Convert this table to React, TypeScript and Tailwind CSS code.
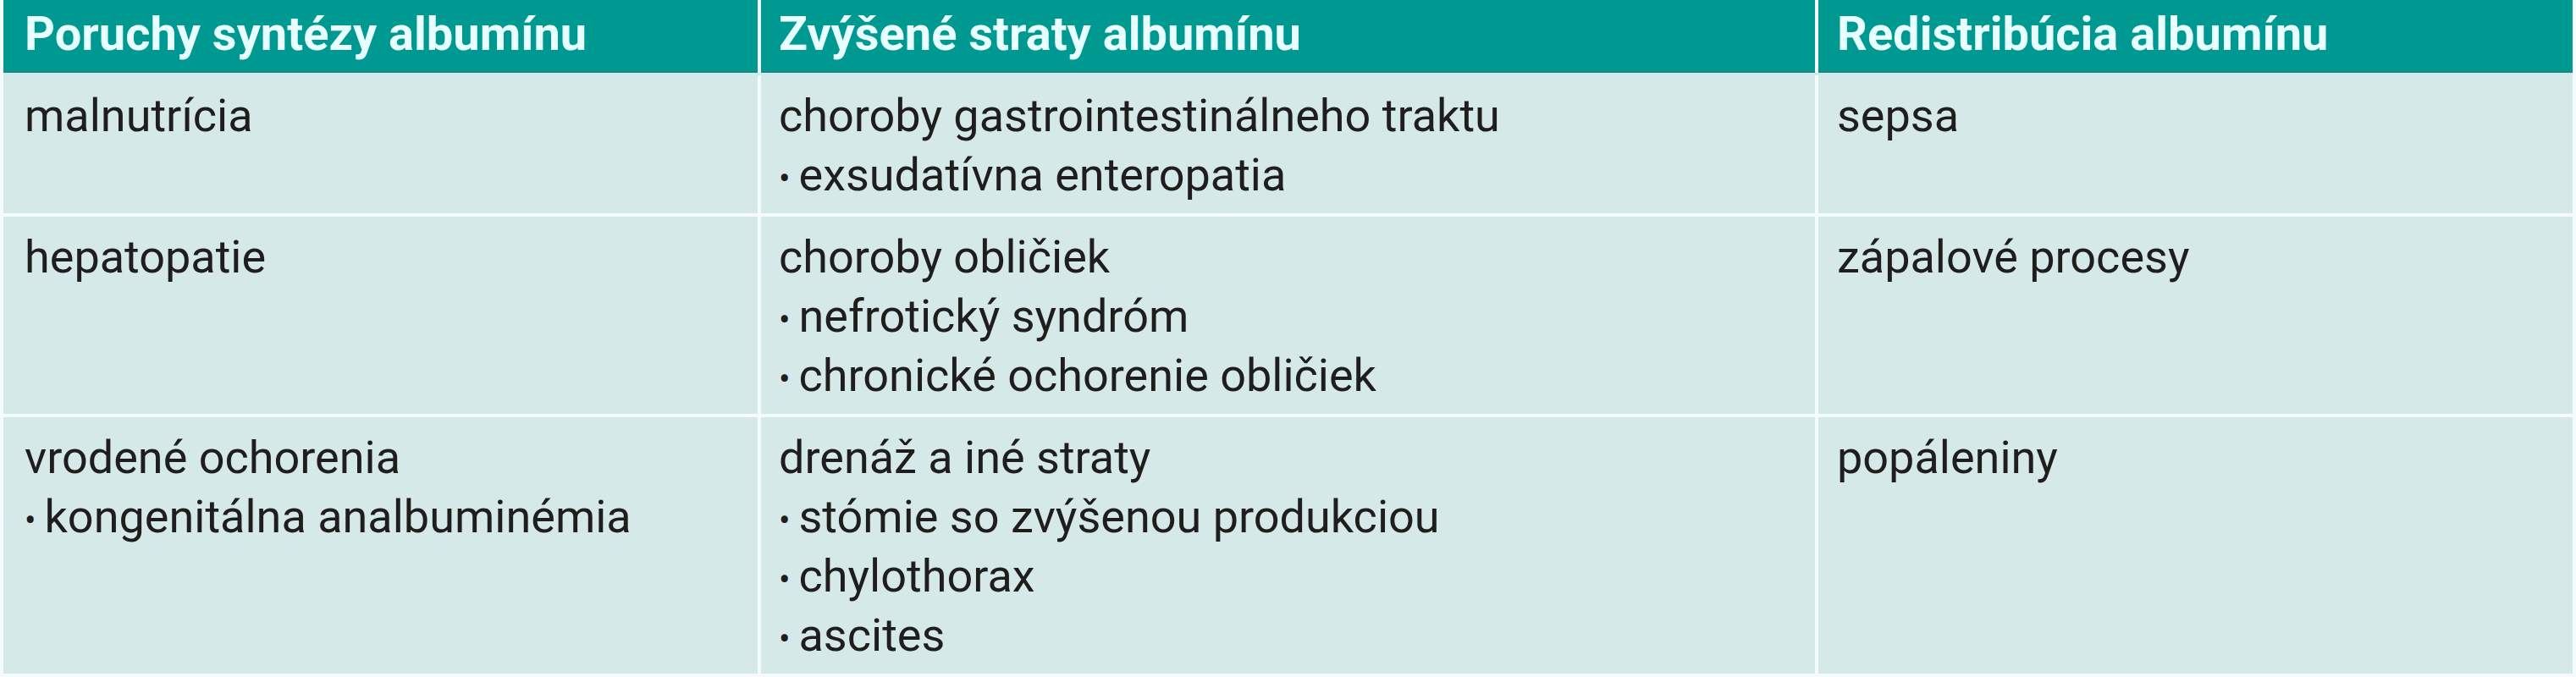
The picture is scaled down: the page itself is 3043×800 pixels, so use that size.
import React from 'react';

type Cell = { title: string; items?: string[] };

const headers = ['Poruchy syntézy albumínu', 'Zvýšené straty albumínu', 'Redistribúcia albumínu'];

const rows: Cell[][] = [
  [
    { title: 'malnutrícia' },
    { title: 'choroby gastrointestinálneho traktu', items: ['exsudatívna enteropatia'] },
    { title: 'sepsa' },
  ],
  [
    { title: 'hepatopatie' },
    { title: 'choroby obličiek', items: ['nefrotický syndróm', 'chronické ochorenie obličiek'] },
    { title: 'zápalové procesy' },
  ],
  [
    { title: 'vrodené ochorenia', items: ['kongenitálna analbuminémia'] },
    { title: 'drenáž a iné straty', items: ['stómie so zvýšenou produkciou', 'chylothorax', 'ascites'] },
    { title: 'popáleniny' },
  ],
];

const pads = ['pl-[25px]', 'pl-[21px]', 'pl-[22px]'];

const App = () => {
  return (
    <div className="min-h-screen bg-[#f3fbfb] pl-[4px] font-['Roboto',sans-serif]">
      <div className="w-[3035px] flex flex-col">
        <div className="grid grid-cols-[891px_1245px_891px] gap-x-[4px]">
          {headers.map((h, i) => (
            <div
              key={h}
              className={`h-[86px] bg-[#009992] border-b-2 border-[#2b7f7c] ${pads[i]} text-[56px] font-bold leading-[80px] text-[#e8ffff]`}
            >
              {h}
            </div>
          ))}
        </div>
        <div className="h-[3px] bg-[#c4efee]" />
        <div className="flex flex-col gap-[4px]">
          {rows.map((row, r) => (
            <div key={r} className="grid grid-cols-[891px_1245px_891px] gap-x-[4px]">
              {row.map((cell, i) => (
                <div
                  key={i}
                  className={`bg-[#d5eae8] ${pads[i]} pt-[13px] pb-[10px] text-[54px] leading-[70px] text-[#1f1d1e]`}
                >
                  <div>{cell.title}</div>
                  {cell.items?.map((it) => (
                    <div key={it}>
                      <span className="text-[40px] leading-none mr-[10px]">•</span>
                      {it}
                    </div>
                  ))}
                </div>
              ))}
            </div>
          ))}
        </div>
      </div>
    </div>
  );
};

export default App;
